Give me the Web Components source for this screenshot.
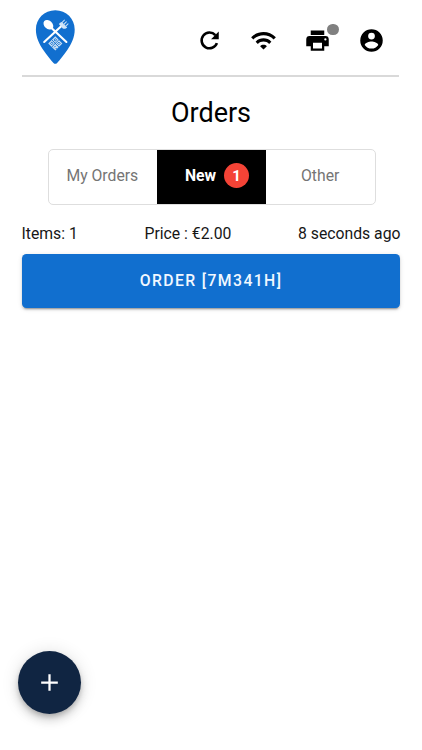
<!DOCTYPE html>
<html lang="en">
<head>
<meta charset="utf-8">
<title>Orders</title>
<style>
html,body{margin:0;height:100%;background:#fff}
body{font-family:Roboto,"Liberation Sans",sans-serif;color:#161616;overflow:hidden}
</style>
</head>
<body>
<orders-page></orders-page>
<script>
function define(name, html) {
  const template = document.createElement('template');
  template.innerHTML = html;
  customElements.define(name, class extends HTMLElement {
    constructor() {
      super();
      this.attachShadow({mode: 'open'}).append(template.content.cloneNode(true));
    }
  });
}

define('brand-logo', `
<style>:host{display:block;width:40px;height:55px}svg{display:block}</style>
<svg width="40" height="55" viewBox="0 0 40 55">
  <path fill="#116fcf" d="M20.300 0.300C9.300 .3.900 8.800.9 19.600c0 8 3.400 14.500 7.400 20.500 3.500 5.300 7.500 10 10.200 12.900q1.800 1.700 3.600 0c2.700-2.900 6.700-7.600 10.200-12.900 4-6 7.400-12.500 7.400-20.500C39.700 8.800 31.300.3 20.300.3z"/>
  <path d="M16.500 18L31.400 32M9.200 32L27 15.500" stroke="#fff" stroke-width="2.100" stroke-linecap="round" fill="none"/>
  <ellipse cx="13.400" cy="14.800" rx="5.600" ry="4" transform="rotate(43 13.400 14.800)" fill="#fff"/>
  <path d="M24.200 14.500l3.600 3.900c1.500.8 3.200.2 4.400-1l-5.400-5.500c-1.700.8-2.900 1.300-2.600 2.600z" fill="#d3e6f8"/>
  <path d="M26.400 13.200l3-3M28.200 15l3.100-3.100M30 16.800l3-3" stroke="#c3ddf5" stroke-width="1.100" stroke-linecap="round"/>
  <g transform="translate(20.300 33.400) rotate(45)">
    <rect x="-5" y="-5" width="10" height="10" fill="#c7def4"/>
    <g fill="none" stroke="#116fcf" stroke-width=".9"><path d="M-5 0H5M0-5V5"/><rect x="-3.400" y="-3.400" width="1.800" height="1.800"/><rect x="1.600" y="-3.400" width="1.800" height="1.800"/><rect x="-3.400" y="1.600" width="1.800" height="1.800"/><path d="M2 1.500v2M3.500 3H5"/></g>
  </g>
</svg>`);

define('icon-button', `
<style>
:host{display:flex;align-items:center;justify-content:center;position:relative;width:54px;height:54px;color:#000}
::slotted(svg){width:27px;height:27px;fill:currentColor;display:block}
.dot{display:none}
:host([status]) .dot{display:block;position:absolute;left:37px;top:10px;width:11.500px;height:11.500px;border-radius:50%;background:#808080}
</style><slot></slot><span class="dot"></span>`);

define('app-header', `
<style>
:host{display:flex;box-sizing:border-box;height:77px;margin:0 23px 0 22px;border-bottom:2px solid #d9d9d9;padding:10px 1px 0 13px;justify-content:space-between;align-items:flex-start}
nav{display:flex;padding-top:3.500px}
</style>
<brand-logo></brand-logo>
<nav>
<icon-button><svg viewBox="0 0 24 24"><path d="M17.200 7.200A7 7 0 1 0 18.600 14.300" fill="none" stroke="currentColor" stroke-width="2.300"/><path d="M20.200 4v6.800h-6.800z"/></svg></icon-button>
<icon-button><svg viewBox="0 0 24 24"><path d="M1 9l2 2c4.970-4.970 13.030-4.970 18 0l2-2C16.930 2.930 7.080 2.930 1 9zm8 8l3 3 3-3c-1.650-1.660-4.340-1.660-6 0zm-4-4l2 2c2.760-2.760 7.240-2.760 10 0l2-2C15.140 9.140 8.870 9.140 5 13z"/></svg></icon-button>
<icon-button status><svg viewBox="0 0 24 24"><path d="M18 3H6v4h12V3m1 9a1 1 0 1 1 0-2 1 1 0 0 1 0 2m-3 7H8v-5h8v5m3-11H5a3 3 0 0 0-3 3v6h4v4h12v-4h4v-6a3 3 0 0 0-3-3z"/></svg></icon-button>
<icon-button><svg viewBox="0 0 24 24"><path d="M12 2a10 10 0 1 0 0 20 10 10 0 0 0 0-20m0 3a3 3 0 1 1 0 6 3 3 0 0 1 0-6m0 14.200a7.200 7.200 0 0 1-6-3.220c.03-1.990 4-3.080 6-3.080s5.970 1.090 6 3.080a7.200 7.200 0 0 1-6 3.220z"/></svg></icon-button>
</nav>`);

define('count-badge', `
<style>:host{display:flex;align-items:center;justify-content:center;width:25px;height:25px;border-radius:50%;background:#f44336;color:#fff;font-size:15px;font-weight:700}</style><slot></slot>`);

define('tab-item', `
<style>
:host{display:flex;box-sizing:border-box;flex:1;align-items:center;justify-content:center;gap:8px;padding-bottom:3px;color:#757575;font-size:15.750px}
:host(:first-child){padding-right:1px}
:host([active]){background:#000;color:#fff;font-weight:700;padding-left:11px}
</style><slot></slot>`);

define('tab-group', `
<style>:host{display:grid;grid-template-columns:1fr 1fr 1fr;box-sizing:border-box;margin:0 46.500px 0 47.500px;height:56px;border:1px solid #dedede;border-radius:5px;overflow:hidden}</style><slot></slot>`);

define('order-card', `
<style>
:host{display:block;margin:17px 22px 0}
.info{display:flex;justify-content:space-between;height:24px;line-height:24px;font-size:15.750px;white-space:nowrap;margin:0 -.5px}
button{display:block;width:100%;height:54px;margin-top:8px;padding:0 0 2px;border:0;border-radius:4.500px;background:#116fcf;color:#f1f8ff;font:500 15.750px Roboto,sans-serif;letter-spacing:1.400px;box-shadow:0 3px 1px -2px #0003,0 2px 2px #00000024,0 1px 5px #0000001f}
</style>
<div class="info"><slot name="items"></slot><slot name="price"></slot><slot name="time"></slot></div>
<button><slot></slot></button>`);

define('add-button', `
<style>
:host{display:flex;align-items:center;justify-content:center;position:absolute;left:18px;top:651px;width:63px;height:63px;border-radius:50%;background:#102542;box-shadow:0 3px 5px -1px #0003,0 6px 10px #00000024,0 1px 18px #0000001f}
svg{width:27px;height:27px;fill:#fff}
</style><svg viewBox="0 0 24 24"><path d="M19.400 13h-6.400v6.400h-2v-6.400H4.600v-2h6.400V4.600h2v6.400h6.400z"/></svg>`);

define('orders-page', `
<style>
:host{display:block;position:relative;height:750px}
h1{margin:19px 0 18px;height:35px;line-height:35px;text-align:center;font-size:27px;font-weight:400;color:#000}
</style>
<app-header></app-header>
<h1>Orders</h1>
<tab-group><tab-item>My Orders</tab-item><tab-item active>New<count-badge>1</count-badge></tab-item><tab-item>Other</tab-item></tab-group>
<order-card><span slot="items">Items: 1</span><span slot="price">Price : €2.00</span><span slot="time">8 seconds ago</span>ORDER [7M341H]</order-card>
<add-button></add-button>`);
</script>
</body>
</html>
